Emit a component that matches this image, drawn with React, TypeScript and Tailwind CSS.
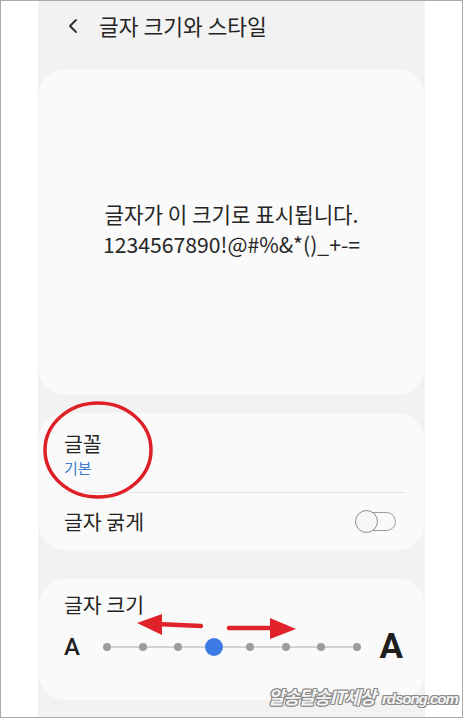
import { ChevronLeft } from 'lucide-react';

const kr = { fontFamily: '"Noto Sans CJK KR", "Noto Sans", sans-serif' };

// Slider stops: 8 positions, the 4th is selected
const stops = [0, 1, 2, 3, 4, 5, 6, 7];
const selected = 3;

const outline = {
    textShadow: '1px 0 #8a8a8a, -1px 0 #8a8a8a, 0 1px #8a8a8a, 0 -1px #8a8a8a, 1px 1px #8a8a8a, -1px -1px #8a8a8a, 1px -1px #8a8a8a, -1px 1px #8a8a8a',
};

function Toggle() {
    return (
        <div className="relative w-[41px] h-[23px]">
            <div className="absolute left-[4px] top-[2px] w-[37px] h-[19px] rounded-full border border-[#9c9c9c] bg-[#fafafa]" />
            <div className="absolute left-0 top-0 w-[23px] h-[23px] rounded-full border border-[#8c8c8c] bg-[#f7f7f7]" />
        </div>
    );
}

function SizeSlider() {
    return (
        <div className="relative w-[258px] h-[18px] flex items-center justify-between">
            <div className="absolute left-[4px] right-[4px] top-[8px] h-[2px] bg-[#d2d2d2]" />
            {stops.map(i =>
                i === selected ? (
                    <div key={i} className="relative w-[18px] h-[18px] -mx-[5px] rounded-full bg-[#3c7be3]" />
                ) : (
                    <div key={i} className="relative w-[8px] h-[8px] rounded-full bg-[#9d9d9d]" />
                )
            )}
        </div>
    );
}

export default function App() {
    return (
        <div className="relative w-[463px] h-[718px] bg-white border border-[#ababab] overflow-hidden" style={kr}>
            <div className="ml-[37px] w-[387px] h-full bg-[#f2f2f2] flex flex-col">
                {/* Header */}
                <div className="h-[68px] flex items-start pt-[10px]">
                    <ChevronLeft className="w-[24px] h-[24px] ml-[23px] mt-[3px] text-[#2b2b2b]" strokeWidth={1.8} />
                    <h1 className="ml-[14px] text-[21.5px] leading-[30px] text-[#242424]">글자 크기와 스타일</h1>
                </div>

                {/* Preview */}
                <div className="ml-[1px] w-[385px] h-[326px] rounded-[26px] bg-[#fafafa] flex flex-col items-center justify-center pb-[6px]">
                    <p className="text-[21.2px] leading-[30px] text-[#262626]">글자가 이 크기로 표시됩니다.</p>
                    <p className="text-[21.2px] leading-[30px] text-[#262626]">1234567890!@#%&amp;*()_+-=</p>
                </div>

                {/* Font */}
                <div className="ml-[1px] mt-[18px] w-[385px] h-[137px] rounded-[26px] bg-[#fafafa] flex flex-col">
                    <div className="h-[79px] pl-[25px] pt-[17px] flex flex-col">
                        <span className="text-[20.5px] leading-[27px] text-[#242424]">글꼴</span>
                        <span className="text-[15px] leading-[22px] text-[#3a7bd0]">기본</span>
                    </div>
                    <div className="ml-[25px] mr-[19px] h-px bg-[#e6e6e6]" />
                    <div className="flex-1 flex items-center justify-between pl-[25px] pr-[28px]">
                        <span className="text-[20.5px] leading-[27px] text-[#242424]">글자 굵게</span>
                        <Toggle />
                    </div>
                </div>

                {/* Size */}
                <div className="ml-[1px] mt-[29px] w-[385px] h-[121px] rounded-[26px] bg-[#fafafa] flex flex-col pl-[25px] pr-[21px]">
                    <span className="mt-[12px] text-[20.5px] leading-[27px] text-[#242424]">글자 크기</span>
                    <div className="mt-[11px] flex items-center">
                        <span className="w-[17px] text-[24px] leading-[28px] font-medium text-[#1f1f1f]" style={{ fontFamily: 'Roboto, sans-serif' }}>A</span>
                        <div className="ml-[22px]">
                            <SizeSlider />
                        </div>
                        <span className="ml-auto text-[35px] leading-[36px] font-bold text-[#1f1f1f]" style={{ fontFamily: 'Roboto, sans-serif' }}>A</span>
                    </div>
                </div>
            </div>

            {/* Annotations */}
            <svg className="absolute left-0 top-0 pointer-events-none" width="463" height="719">
                <ellipse cx="97" cy="449" rx="53" ry="47" fill="none" stroke="#df1f26" strokeWidth="3.5" />
                <line x1="200" y1="625" x2="156" y2="623" stroke="#e0222a" strokeWidth="4.5" strokeLinecap="round" />
                <polygon points="136,622 161,613 161,634" fill="#e0222a" />
                <line x1="228" y1="627" x2="272" y2="627" stroke="#e0222a" strokeWidth="4.5" strokeLinecap="round" />
                <polygon points="295,628 269,617 269,638" fill="#e0222a" />
            </svg>

            {/* Watermark */}
            <div className="absolute left-[267px] top-[684px] flex items-baseline whitespace-nowrap font-bold italic text-[#f4f4f4]" style={outline}>
                <span className="text-[18px] leading-[22px] tracking-[-1.2px]">알송달송IT세상</span>
                <span className="ml-[7px] text-[15px] leading-[22px] tracking-[-1px]" style={{ fontFamily: '"Liberation Sans", Arial, sans-serif' }}>rdsong.com</span>
            </div>
        </div>
    );
}
